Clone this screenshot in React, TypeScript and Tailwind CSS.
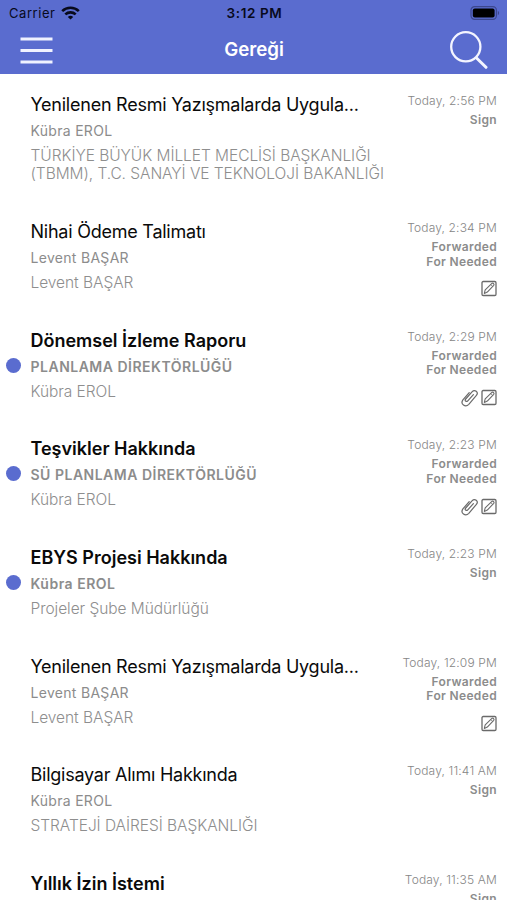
import clsx from "clsx"

interface Item {
  title: string
  sender?: string
  detail: string[]
  date: string
  status: string[]
  unread?: boolean
  attachment?: boolean
  note?: boolean
}

const items: Item[] = [
  {
    title: "Yenilenen Resmi Yazışmalarda Uygula...",
    sender: "Kübra EROL",
    detail: ["TÜRKİYE BÜYÜK MİLLET MECLİSİ BAŞKANLIĞI", "(TBMM), T.C. SANAYİ VE TEKNOLOJİ BAKANLIĞI"],
    date: "Today, 2:56 PM",
    status: ["Sign"],
  },
  {
    title: "Nihai Ödeme Talimatı",
    sender: "Levent BAŞAR",
    detail: ["Levent BAŞAR"],
    date: "Today, 2:34 PM",
    status: ["Forwarded", "For Needed"],
    note: true,
  },
  {
    title: "Dönemsel İzleme Raporu",
    sender: "PLANLAMA DİREKTÖRLÜĞÜ",
    detail: ["Kübra EROL"],
    date: "Today, 2:29 PM",
    status: ["Forwarded", "For Needed"],
    unread: true,
    attachment: true,
    note: true,
  },
  {
    title: "Teşvikler Hakkında",
    sender: "SÜ PLANLAMA DİREKTÖRLÜĞÜ",
    detail: ["Kübra EROL"],
    date: "Today, 2:23 PM",
    status: ["Forwarded", "For Needed"],
    unread: true,
    attachment: true,
    note: true,
  },
  {
    title: "EBYS Projesi Hakkında",
    sender: "Kübra EROL",
    detail: ["Projeler Şube Müdürlüğü"],
    date: "Today, 2:23 PM",
    status: ["Sign"],
    unread: true,
  },
  {
    title: "Yenilenen Resmi Yazışmalarda Uygula...",
    sender: "Levent BAŞAR",
    detail: ["Levent BAŞAR"],
    date: "Today, 12:09 PM",
    status: ["Forwarded", "For Needed"],
    note: true,
  },
  {
    title: "Bilgisayar Alımı Hakkında",
    sender: "Kübra EROL",
    detail: ["STRATEJİ DAİRESİ BAŞKANLIĞI"],
    date: "Today, 11:41 AM",
    status: ["Sign"],
  },
  {
    title: "Yıllık İzin İstemi",
    detail: [],
    date: "Today, 11:35 AM",
    status: ["Sign"],
    unread: true,
  },
]

export default function App() {
  return (
    <div className="flex h-[900px] w-[507px] flex-col overflow-hidden bg-white font-['Inter','Liberation_Sans',sans-serif]">
      <header className="h-[74px] shrink-0 bg-[#5a6ccf]">
        <StatusBar />
        <NavBar />
      </header>
      <main className="min-h-0 flex-1 overflow-hidden">
        {items.map((item, index) => (
          <Row key={index} item={item} />
        ))}
      </main>
    </div>
  )
}

function StatusBar() {
  return (
    <div className="grid h-[27px] grid-cols-[1fr_auto_1fr] items-center pl-[9px] pr-[7px] text-[13px] text-[#080a1c]">
      <div className="flex items-center gap-[6px]">
        <span className="tracking-[0.55px]">Carrier</span>
        <svg className="-mt-px" width="19" height="14" viewBox="0 0 19 14" fill="none" stroke="currentColor" strokeWidth="2.6">
          <path d="M1.2 5.1a12 12 0 0 1 16.6 0" />
          <path d="M4.3 8.4a7.6 7.6 0 0 1 10.4 0" />
          <path d="M6.8 10.9a4 4 0 0 1 5.4 0L9.5 13.6z" fill="currentColor" stroke="none" />
        </svg>
      </div>
      <span className="text-center text-[13.5px] font-semibold tracking-[0.6px]">3:12 PM</span>
      <svg className="-mt-px justify-self-end" width="30" height="14" viewBox="0 0 30 14">
        <rect x="1" y="0.7" width="25.4" height="12.6" rx="3.6" fill="none" stroke="#3c478e" strokeWidth="1.2" />
        <rect x="2.8" y="2.6" width="21.8" height="8.8" rx="2" fill="#000" />
        <path d="M27.8 4.8c1.8.8 1.8 3.6 0 4.4z" fill="#3c478e" />
      </svg>
    </div>
  )
}

function NavBar() {
  return (
    <div className="grid h-[47px] grid-cols-[1fr_auto_1fr] items-center pl-5 pr-[19px] text-white">
      <button className="justify-self-start" aria-label="Menu">
        <svg width="33" height="28" viewBox="0 0 33 28" fill="none" stroke="#f0f2ff" strokeWidth="2.8">
          <path d="M0.5 2h32M0.5 13.5h32M0.5 25h32" />
        </svg>
      </button>
      <h1 className="text-center text-[18.7px] font-semibold">Gereği</h1>
      <button className="-mt-[2px] justify-self-end" aria-label="Search">
        <svg width="39" height="39" viewBox="0 0 39 39" fill="none" stroke="#f4f5ff" strokeLinecap="round">
          <circle cx="16.8" cy="16.8" r="14.6" strokeWidth="2.3" />
          <path d="M27.5 28l9.5 9.3" strokeWidth="3" />
        </svg>
      </button>
    </div>
  )
}

function Row({ item }: { item: Item }) {
  return (
    <article
      className={clsx(
        "flex justify-between pr-[10px] whitespace-nowrap",
        item.detail.length > 1 ? "h-[127.4px]" : "h-[108.7px]",
      )}
    >
      <div className="flex w-[30.5px] shrink-0 justify-start pl-[6px] pt-[47.5px]">
        {item.unread && <span className="size-[15px] rounded-full bg-[#5a6ccf]" />}
      </div>
      <div className="flex-1 pt-[18.6px]">
        <h2
          className={clsx(
            "text-[18px] leading-6 text-[#0a0a0a]",
            item.unread ? "font-semibold" : "font-normal tracking-[-0.24px]",
          )}
        >
          {item.title}
        </h2>
        {item.sender && (
          <p
            className={clsx(
              "text-[14px] leading-7 text-[#8c8c8c]",
              item.unread ? "font-semibold tracking-[0.5px]" : "tracking-[0.3px]",
            )}
          >
            {item.sender}
          </p>
        )}
        <div className="mt-[2px] text-[15.5px] leading-[18.5px] font-light tracking-[-0.05px] text-[#8e8e8e]">
          {item.detail.map((line) => (
            <p key={line}>{line}</p>
          ))}
        </div>
      </div>
      <div className="flex flex-col items-end pt-[16.6px] text-[12px]">
        <time className="leading-5 font-light tracking-[0.16px] text-[#868686]">{item.date}</time>
        <div className="mt-[2px] text-right leading-[14.7px] font-semibold tracking-[0.35px] text-[#8c8c8c]">
          {item.status.map((line) => (
            <p key={line}>{line}</p>
          ))}
        </div>
        <div className="mt-[11px] flex gap-[3px] text-[#6a6a6a]">
          {item.attachment && <ClipIcon />}
          {item.note && <NoteIcon />}
        </div>
      </div>
    </article>
  )
}

function ClipIcon() {
  return (
    <svg width="17" height="18" viewBox="0 0 17 18" fill="none" stroke="currentColor" strokeWidth="1.2" strokeLinecap="round">
      <path d="M12.4 5.6l-5.6 6.2c-1.5 1.6-3.5-.2-2.1-1.8l6.3-7.2c2.8-3 7 .4 4.4 3.6l-7.6 8.9c-3.4 3.6-8.8-.2-5.9-4.4l6.3-7.2" />
    </svg>
  )
}

function NoteIcon() {
  return (
    <svg width="16" height="17" viewBox="0 0 16 17" fill="none" stroke="currentColor" strokeLinejoin="round">
      <rect x="1" y="1.5" width="14" height="14" rx="1.2" strokeWidth="1.3" />
      <path d="M3.3 13.4l.9-3.5 6.7-6.5c1.1-.9 2.8.7 1.8 1.9l-6.4 6.8z" strokeWidth="1.1" />
      <path d="M9.8 4.6l1.9 1.9" strokeWidth="0.8" />
    </svg>
  )
}
